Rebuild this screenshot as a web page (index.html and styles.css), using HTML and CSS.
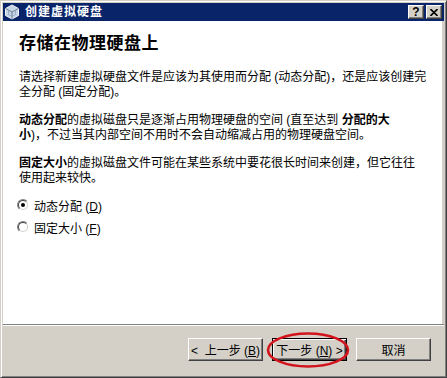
FILE: index.html
```html
<!DOCTYPE html>
<html lang="zh-CN">

<head>
  <meta charset="UTF-8">
  <title>创建虚拟硬盘</title>
  <link rel="stylesheet" href="styles.css">
</head>

<body>
  <div class="window">
    <!-- Title bar -->
    <div class="titlebar">
      <svg class="app-icon" width="16" height="16" viewBox="0 0 16 16">
        <path d="M8 1 L14.5 4.5 L14.5 11.5 L8 15 L1.5 11.5 L1.5 4.5 Z" fill="#c9d5e4" stroke="#eef3f8" stroke-width="1" />
        <path d="M1.5 4.5 L8 8 L14.5 4.5 M8 8 V15" stroke="#6d7f99" stroke-width="1" fill="none" />
        <path d="M4.5 6.2 V10.5 L8 12.4 M11.5 6.2 V10.5 L8 12.4" stroke="#8fa0b8" stroke-width="0.8" fill="none" />
      </svg>
      <span class="title">创建虚拟硬盘</span>
      <div class="caption-buttons">
        <button class="cap-btn help">?</button>
        <button class="cap-btn">
          <svg width="8" height="7" viewBox="0 0 8 7">
            <path d="M0.5 0 L4 3.5 L7.5 0 M0.5 7 L4 3.5 L7.5 7" stroke="#000" stroke-width="1.6" fill="none" />
          </svg>
        </button>
      </div>
    </div>

    <!-- Wizard page -->
    <div class="page">
      <h1>存储在物理硬盘上</h1>
      <p>请选择新建虚拟硬盘文件是应该为其使用而分配 (动态分配)，还是应该创建完<br>全分配 (固定分配)。</p>
      <p><b>动态分配</b>的虚拟磁盘只是逐渐占用物理硬盘的空间 (直至达到 <b>分配的大</b><br><b>小</b>)，不过当其内部空间不用时不会自动缩减占用的物理硬盘空间。</p>
      <p><b>固定大小</b>的虚拟磁盘文件可能在某些系统中要花很长时间来创建，但它往往<br>使用起来较快。</p>

      <div class="options">
        <label class="radio">
          <span class="radio-box checked"><span class="radio-inner"></span></span>
          <span>动态分配 (<u>D</u>)</span>
        </label>
        <label class="radio">
          <span class="radio-box"><span class="radio-inner"></span></span>
          <span>固定大小 (<u>F</u>)</span>
        </label>
      </div>
    </div>

    <!-- Buttons -->
    <div class="footer">
      <button class="btn">&lt;&nbsp; 上一步 (<u>B</u>)</button>
      <button class="btn default">下一步 (<u>N</u>) &gt;</button>
      <button class="btn">取消</button>
      <svg class="mark" width="86" height="38" viewBox="0 0 86 38">
        <ellipse cx="43" cy="19" rx="40" ry="16.5" fill="none" stroke="#d3141c" stroke-width="2.6" />
      </svg>
    </div>
  </div>
</body>

</html>
```

FILE: styles.css
```css
* {
  box-sizing: border-box;
}

body {
  margin: 0;
  background-color: #d4d0c8;
  font-family: "Liberation Sans", "Noto Sans CJK SC", sans-serif;
  font-size: 12px;
  color: #000;
}

.window {
  width: 447px;
  height: 378px;
  display: flex;
  flex-direction: column;
  padding: 2px;
  background-color: #d4d0c8;
  border: 1px solid;
  border-color: #d4d0c8 #404040 #404040 #d4d0c8;
  box-shadow: inset 1px 1px #fff, inset -1px -1px #808080;
}

/* Title bar */
.titlebar {
  height: 18px;
  display: flex;
  align-items: center;
  padding: 0 2px 0 1px;
  background-color: #0a246a;
}

.app-icon {
  margin-right: 5px;
}

.title {
  color: #fff;
  font-weight: bold;
  letter-spacing: 1px;
  line-height: 18px;
}

.caption-buttons {
  margin-left: auto;
  display: flex;
  gap: 2px;
}

.cap-btn {
  width: 16px;
  height: 14px;
  padding: 0;
  display: flex;
  align-items: center;
  justify-content: center;
  background-color: #d4d0c8;
  border: 1px solid;
  border-color: #fff #404040 #404040 #fff;
  box-shadow: inset -1px -1px #808080;
  font-family: "Liberation Sans", sans-serif;
  font-size: 12px;
  font-weight: bold;
  line-height: 1;
}

/* Page */
.page {
  flex: 1;
  padding: 13px 16px 0;
  margin-right: 2px;
  background-color: #fff;
}

h1 {
  margin: 0 0 16px;
  font-size: 17px;
  line-height: 20px;
  letter-spacing: 0.5px;
  font-weight: bold;
}

p {
  margin: 0 0 13px;
  line-height: 15px;
  white-space: nowrap;
}

.options {
  margin-top: -5px;
  display: flex;
  flex-direction: column;
}

.radio {
  height: 22px;
  display: flex;
  align-items: center;
  gap: 5px;
  margin-left: -2px;
}

.radio-box {
  width: 12px;
  height: 12px;
  border-radius: 50%;
  border: 1px solid;
  border-color: #808080 #fff #fff #808080;
}

.radio-inner {
  display: flex;
  align-items: center;
  justify-content: center;
  width: 10px;
  height: 10px;
  border-radius: 50%;
  border: 1px solid;
  border-color: #404040 #d4d0c8 #d4d0c8 #404040;
  background-color: #fff;
}

.checked .radio-inner::after {
  content: "";
  width: 4px;
  height: 4px;
  border-radius: 50%;
  background-color: #000;
}

/* Footer */
.footer {
  position: relative;
  height: 51px;
  display: flex;
  justify-content: flex-end;
  align-items: flex-start;
  gap: 9px;
  padding: 13px 13px 0 0;
  border-top: 1px solid #808080;
  box-shadow: inset 0 1px #fff;
}

.btn {
  width: 75px;
  height: 23px;
  padding: 0;
  background-color: #d4d0c8;
  border: 1px solid;
  border-color: #fff #404040 #404040 #fff;
  box-shadow: inset -1px -1px #808080;
  font-family: inherit;
  font-size: 12px;
  color: #000;
}

.btn.default {
  border-color: #000;
  box-shadow: inset 1px 1px #fff, inset -1px -1px #404040, inset -2px -2px #808080;
}

.mark {
  position: absolute;
  left: 262px;
  top: 6px;
}
```
